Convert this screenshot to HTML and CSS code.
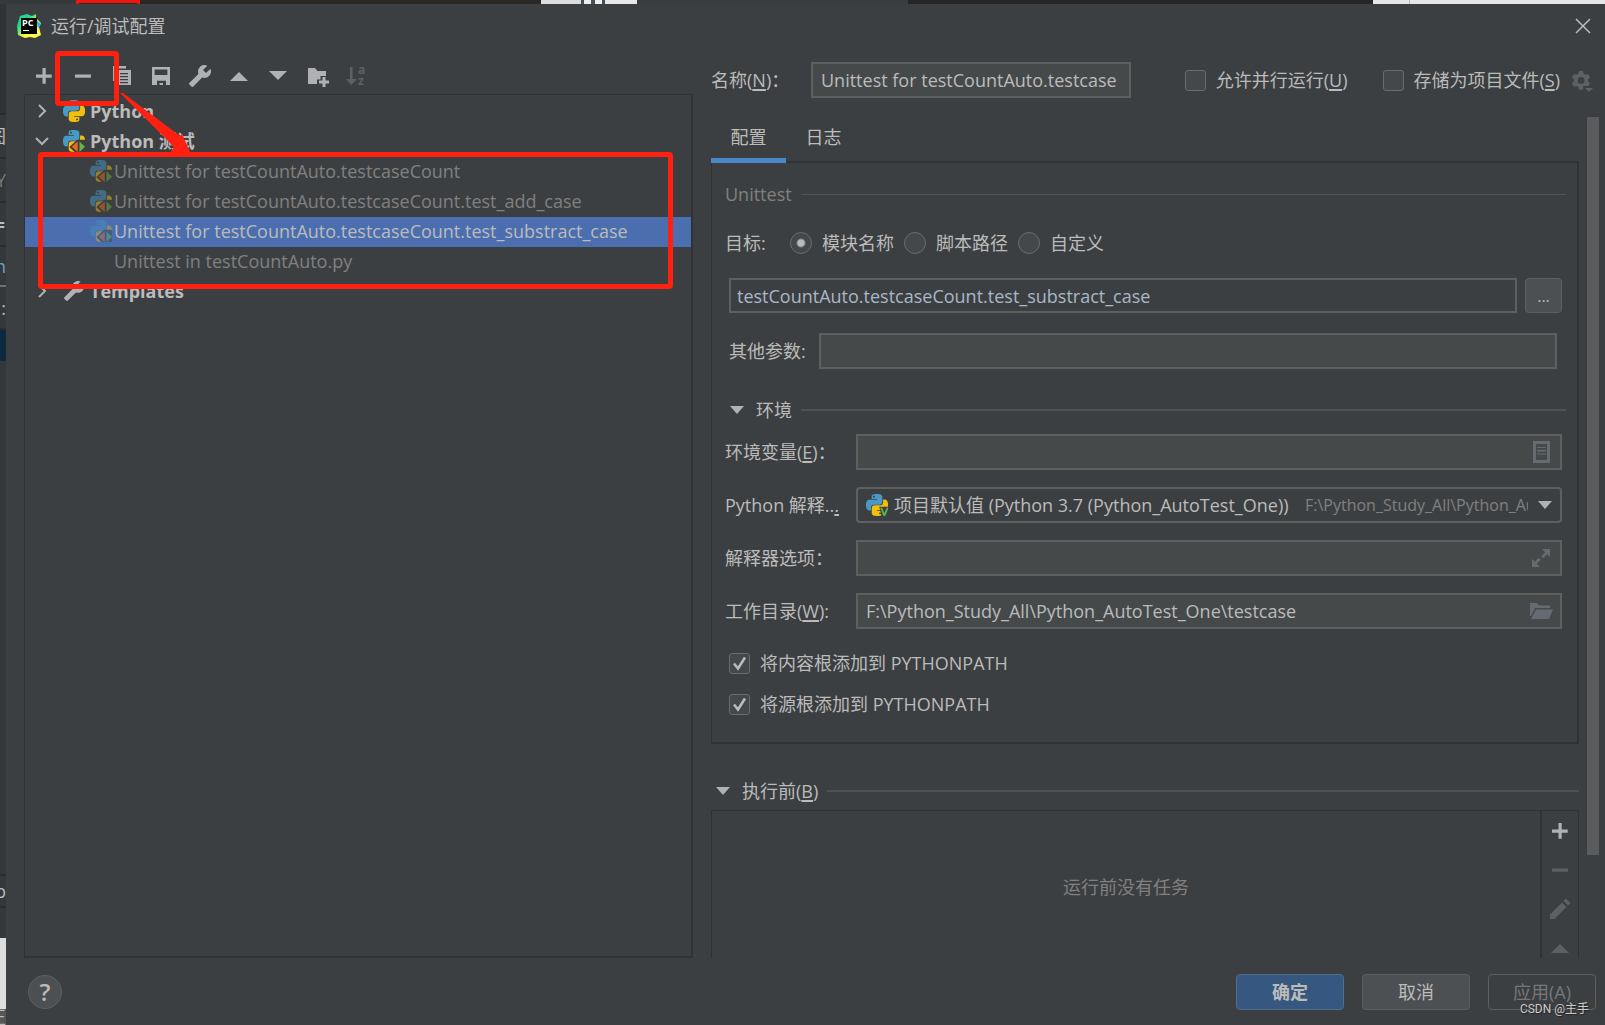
FILE: index.html
```html
<!DOCTYPE html>
<html lang="zh-CN">
<head>
<meta charset="utf-8">
<title>运行/调试配置</title>
<link rel="stylesheet" href="styles.css">
</head>
<body>
<svg class="defs" aria-hidden="true">
  <defs>
    <linearGradient id="pc-grad" x1="0" y1="0" x2="1" y2="1">
      <stop offset="0.3" stop-color="#21d789"/>
      <stop offset="0.6" stop-color="#fcf84a"/>
    </linearGradient>
  </defs>
  <symbol id="i-python" viewBox="0 0 24 24">
    <path fill="#4799c8" d="M14.25.18l.9.2.73.26.59.3.45.32.34.34.25.34.16.33.1.3.04.26.02.2-.01.13V8.5l-.05.63-.13.55-.21.46-.26.38-.3.31-.33.25-.35.19-.35.14-.33.1-.3.07-.26.04-.21.02H8.77l-.69.05-.59.14-.5.22-.41.27-.33.32-.27.35-.2.36-.15.37-.1.35-.07.32-.04.27-.02.21v3.06H3.17l-.21-.03-.28-.07-.32-.12-.35-.18-.36-.26-.36-.36-.35-.46-.32-.59-.28-.73-.21-.88-.14-1.05-.05-1.23.06-1.22.16-1.04.24-.87.32-.71.36-.57.4-.44.42-.33.42-.24.4-.16.36-.1.32-.05.24-.01h.16l.06.01h8.16v-.83H6.18l-.01-2.75-.02-.37.05-.34.11-.31.17-.28.25-.26.31-.23.38-.2.44-.18.51-.15.58-.12.64-.1.71-.06.77-.04.84-.02 1.27.05zm-6.3 1.98l-.23.33-.08.41.08.41.23.34.33.22.41.09.41-.09.33-.22.23-.34.08-.41-.08-.41-.23-.33-.33-.22-.41-.09-.41.09z"/>
    <path fill="#f2bf0c" d="M21.1 6.11l.28.06.32.12.35.18.36.27.36.35.35.47.32.59.28.73.21.88.14 1.04.05 1.23-.06 1.23-.16 1.04-.24.86-.32.71-.36.57-.4.45-.42.33-.42.24-.4.16-.36.09-.32.05-.24.02-.16-.01h-8.22v.82h5.84l.01 2.76.02.36-.05.34-.11.31-.17.29-.25.25-.31.24-.38.2-.44.17-.51.15-.58.13-.64.09-.71.07-.77.04-.84.01-1.27-.04-1.07-.14-.9-.2-.73-.25-.59-.3-.45-.33-.34-.34-.25-.34-.16-.33-.1-.3-.04-.25-.02-.2.01-.13v-5.34l.05-.64.13-.54.21-.46.26-.38.3-.32.33-.24.35-.2.35-.14.33-.1.3-.06.26-.04.21-.02.13-.01h5.84l.69-.05.59-.14.5-.21.41-.28.33-.32.27-.35.2-.36.15-.36.1-.35.07-.32.04-.28.02-.21V6.07h2.09l.14.01zm-6.47 14.25l-.23.33-.08.41.08.41.23.33.33.23.41.08.41-.08.33-.23.23-.33.08-.41-.08-.41-.23-.33-.33-.23-.41-.08-.41.08z"/>
  </symbol>
  <symbol id="i-pytest" viewBox="0 0 24 24">
    <use href="#i-python" width="24" height="24"/>
    <path class="cut" d="M7 18.500L15.500 10.500H24V24H12.500z"/>
    <path fill="#f26522" d="M16 12.500V24L9.500 18.300z"/>
    <path fill="#62b543" d="M18 12.500V24L24 18.300z"/>
  </symbol>
  <symbol id="i-pyvenv" viewBox="0 0 24 24">
    <use href="#i-python" width="24" height="24"/>
    <path class="cut" d="M14.500 14H24V24H17z"/>
    <path fill="none" stroke="#62b543" stroke-width="2" d="M16.500 15L20 23.500L23.700 15"/>
  </symbol>
  <symbol id="i-wrench" viewBox="0 0 24 24">
    <path transform="translate(24 0) scale(-1 1)" d="M22.7 19l-9.100-9.100c.9-2.300.4-5-1.500-6.900-2-2-5-2.400-7.400-1.300L9 6 6 9 1.600 4.700C.4 7.100.9 10.100 2.900 12.100c1.900 1.900 4.600 2.400 6.900 1.500l9.100 9.100c.4.4 1 .4 1.400 0l2.300-2.300c.5-.4.5-1.100.1-1.400z"/>
  </symbol>
  <symbol id="i-plus" viewBox="0 0 24 24"><path d="M10.500 4h3.200v6.500h6v3.200h-6v6h-3.200v-6H4v-3.200h6.500z"/></symbol>
  <symbol id="i-minus" viewBox="0 0 24 24"><path d="M4 10.500h16v3.200H4z"/></symbol>
  <symbol id="i-up" viewBox="0 0 24 24"><path d="M3 17L12 8l9 9z"/></symbol>
  <symbol id="i-down" viewBox="0 0 24 24"><path d="M3 7h18l-9 9z"/></symbol>
  <symbol id="i-tri" viewBox="0 0 14 8"><path d="M0 0h14L7 8z"/></symbol>
</svg>

<div class="desktop">
  <div class="strip-top" aria-hidden="true">
    <span class="s-a"></span><span class="s-red"></span><span class="s-b"></span><span class="s-c"></span><span class="s-d"></span><span class="s-e"></span><span class="s-f"></span><span class="s-g"></span>
  </div>
  <div class="strip-left" aria-hidden="true">
    <span class="l-a"></span><span class="l-b">图</span><span class="l-c">Y</span><span class="l-d">≑</span><span class="l-e">n</span><span class="l-f">:</span><span class="l-g"></span><span class="l-h"></span><span class="l-i">p</span><span class="l-m"></span><span class="l-j"></span><span class="l-k">正</span>
  </div>

  <main class="dialog">
    <header class="titlebar">
      <svg class="logo" viewBox="0 0 24 24" aria-hidden="true">
        <path fill="url(#pc-grad)" d="M3 2L10 0l5 2 4-2v4l5 5-2 4 2 8-6 3-5-1-5 1-7-3L0 12z"/>
        <path fill="#07c3f2" d="M19 6l5 4-3 4z"/>
        <path d="M4 4h16v16H4z"/>
        <text x="5" y="12" class="logo-text">PC</text>
        <path fill="#fff" d="M6 16h6v1H6z"/>
      </svg>
      <h1>运行/调试配置</h1>
      <button class="close" aria-label="关闭"><svg viewBox="0 0 16 16"><path d="M1 1l14 14M15 1L1 15"/></svg></button>
    </header>

    <div class="content">
      <section class="left">
        <div class="toolbar">
          <button aria-label="添加"><svg><use href="#i-plus"/></svg></button>
          <button aria-label="移除"><svg><use href="#i-minus"/></svg></button>
          <button aria-label="复制"><svg viewBox="0 0 24 24"><path d="M3 2h13v2.500H5.500V17H3z"/><path fill-rule="evenodd" d="M7 6h14v15H7zM10 9v1.200h8V9zM10 12v1.200h8V12zM10 15v1.200h8V15zM10 18v1.200h8V18z"/></svg></button>
          <button aria-label="保存"><svg viewBox="0 0 24 24"><path fill-rule="evenodd" d="M3 3h18v18h-4v-4.300H8V21H3zM5.600 5.500V11h12.800V5.500z"/><path d="M10.500 19h3.500v2h-3.500z"/></svg></button>
          <button aria-label="编辑模板"><svg><use href="#i-wrench"/></svg></button>
          <button aria-label="上移"><svg><use href="#i-up"/></svg></button>
          <button aria-label="下移"><svg><use href="#i-down"/></svg></button>
          <button aria-label="新建文件夹"><svg viewBox="0 0 24 24"><path d="M3 4h7l2.500 3H21v5h-5.500v3.500H12V20H3z"/><path d="M17.500 13h3v3.500H24v3h-3.500V23h-3v-3.500H14v-3h3.500z"/></svg></button>
          <button class="off" aria-label="排序"><svg viewBox="0 0 24 24"><path d="M6 3h2.500v12H13l-5.700 6L2 15h4z"/><text x="14" y="10" class="az">a</text><text x="14" y="21" class="az">z</text></svg></button>
        </div>
        <ul class="tree">
          <li class="node"><svg class="chev" viewBox="0 0 14 14"><path d="M4 1l6 6-6 6"/></svg><svg class="ico"><use href="#i-python"/></svg><b>Python</b></li>
          <li class="node"><svg class="chev" viewBox="0 0 14 14"><path d="M1 4l6 6 6-6"/></svg><svg class="ico"><use href="#i-pytest"/></svg><b>Python 测试</b></li>
          <li class="leaf"><svg class="ico"><use href="#i-pytest"/></svg><span>Unittest for testCountAuto.testcaseCount</span></li>
          <li class="leaf"><svg class="ico"><use href="#i-pytest"/></svg><span>Unittest for testCountAuto.testcaseCount.test_add_case</span></li>
          <li class="leaf selected"><svg class="ico"><use href="#i-pytest"/></svg><span>Unittest for testCountAuto.testcaseCount.test_substract_case</span></li>
          <li class="leaf"><svg class="ico"></svg><span>Unittest in testCountAuto.py</span></li>
          <li class="node"><svg class="chev" viewBox="0 0 14 14"><path d="M4 1l6 6-6 6"/></svg><svg class="ico"><use href="#i-wrench"/></svg><b>Templates</b></li>
        </ul>
      </section>

      <section class="right">
        <div class="namebar">
          <label class="name-label" for="name">名称(<u>N</u>)：</label>
          <input id="name" class="field name-field" type="text" value="Unittest for testCountAuto.testcase">
          <div class="namebar-end">
            <label class="check"><input type="checkbox"><span>允许并行运行(<u>U</u>)</span></label>
            <label class="check"><input type="checkbox"><span>存储为项目文件(<u>S</u>)</span></label>
            <button class="gear" aria-label="存储设置" disabled><svg viewBox="0 0 22 22"><path fill-rule="evenodd" d="M7 0h4l.6 2.600 1.900 1.100 2.600-.8 2 3.500-2 1.800v2.200l2 1.800-2 3.500-2.600-.8-1.900 1.100L11 18.800H7l-.6-2.800-1.900-1.100-2.600.8-2-3.500 2-1.800V8.200l-2-1.800 2-3.500 2.600.8 1.900-1.100zM9 6a3.400 3.400 0 1 0 0 6.800A3.400 3.400 0 0 0 9 6z"/><path class="gear-tri" d="M11 15h11v2l-5 5h-2l-4-4z"/><path d="M13 17h8l-4 4z"/></svg></button>
          </div>
        </div>

        <div class="viewport">
          <div class="page">
            <div class="tabs" role="tablist">
              <button class="tab active" role="tab">配置</button>
              <button class="tab" role="tab">日志</button>
            </div>
            <div class="panel">
              <div class="group muted"><span>Unittest</span><hr></div>
              <fieldset class="target">
                <legend>目标:</legend>
                <label class="radio"><input type="radio" name="target" checked><span>模块名称</span></label>
                <label class="radio"><input type="radio" name="target"><span>脚本路径</span></label>
                <label class="radio"><input type="radio" name="target"><span>自定义</span></label>
              </fieldset>
              <div class="target-row">
                <input class="field editor" type="text" aria-label="模块名称" value="testCountAuto.testcaseCount.test_substract_case">
                <button class="btn browse">...</button>
              </div>
              <div class="params">
                <label for="params">其他参数:</label>
                <input id="params" class="field" type="text">
              </div>
              <div class="group env"><svg class="tri"><use href="#i-tri"/></svg><span>环境</span><hr class="thick"></div>
              <div class="form">
                <label for="env">环境变量(<u>E</u>)：</label>
                <div class="field wrap"><input id="env" type="text"><svg viewBox="0 0 22 22"><path fill-rule="evenodd" d="M3 0h17v22H3zM6 3v16h11V3z"/><path d="M7 6h9v1H7zM7 9h9v1.500H7zM7 12.500h9v1H7z"/></svg></div>
                <label for="sdk">Python 解释..<u>.</u></label>
                <div class="field combo"><svg class="ico"><use href="#i-pyvenv"/></svg><select id="sdk"><option>项目默认值 (Python 3.7 (Python_AutoTest_One))</option></select><span class="path">F:\Python_Study_All\Python_AutoTest_One\venv</span><svg class="tri"><use href="#i-tri"/></svg></div>
                <label for="opts">解释器选项：</label>
                <div class="field wrap"><input id="opts" type="text"><svg viewBox="0 0 22 22"><path d="M12 2h8v8l-2.800-2.800-4 4-2-2 4-4zM2 20v-8l2.800 2.800 4-4 2 2-4 4L10 20z"/></svg></div>
                <label for="wd">工作目录(<u>W</u>):</label>
                <div class="field wrap"><input id="wd" type="text" value="F:\Python_Study_All\Python_AutoTest_One\testcase"><svg viewBox="0 0 22 22"><path d="M0 3h7l2 2.500h11V8H5L1 16H0z"/><path d="M6 9.500h17L19 19H1z"/></svg></div>
              </div>
              <div class="checks">
                <label class="check"><input type="checkbox" checked><span>将内容根添加到 PYTHONPATH</span></label>
                <label class="check"><input type="checkbox" checked><span>将源根添加到 PYTHONPATH</span></label>
              </div>
            </div>
            <div class="group before"><svg class="tri"><use href="#i-tri"/></svg><span>执行前(<u>B</u>)</span><hr class="thick"></div>
            <div class="tasks">
              <p>运行前没有任务</p>
              <div class="task-tools">
                <button aria-label="添加任务"><svg><use href="#i-plus"/></svg></button>
                <button class="off" aria-label="移除任务"><svg><use href="#i-minus"/></svg></button>
                <button class="off" aria-label="编辑任务"><svg viewBox="0 0 24 24"><path d="M2 17.500L14 5.500 18.500 10 6.500 22H2zM15.500 4L18 1.500 22.500 6 20 8.500z"/></svg></button>
                <button class="off" aria-label="上移任务"><svg><use href="#i-up"/></svg></button>
                <button class="off" aria-label="下移任务"><svg><use href="#i-down"/></svg></button>
              </div>
            </div>
          </div>
          <div class="scrollbar"></div>
        </div>
      </section>
    </div>

    <footer class="footer">
      <button class="help" aria-label="帮助">?</button>
      <button class="btn primary">确定</button>
      <button class="btn">取消</button>
      <button class="btn disabled">应用(A)</button>
    </footer>
  </main>

  <div class="mark mark-remove"></div>
  <div class="mark mark-list"></div>
  <svg class="arrow" viewBox="0 0 74 64" aria-hidden="true"><path d="M0 0h3L60 43l2-2 9 20-21-1 4-6z"/></svg>
  <div class="credit">CSDN @主手</div>
</div>
</body>
</html>
```
FILE: styles.css
```css
* { box-sizing: border-box; }

body {
  margin: 0;
  background: #3c3f41;
  color: #bbbbbb;
  font: 18px/30px "Open Sans", "Noto Sans CJK SC", sans-serif;
}

button, input, select {
  font: inherit;
  color: inherit;
  margin: 0;
  padding: 0;
  border: 0;
  background: none;
}

h1, p, ul, fieldset, legend { margin: 0; padding: 0; border: 0; }
u { text-underline-offset: 2px; text-decoration-thickness: 2px; }
.defs { position: absolute; width: 0; height: 0; }
svg { display: block; fill: #afb1b3; flex: none; }
.cut { fill: #3c3f41; }

/* window and the application behind it */
.desktop {
  position: relative;
  display: grid;
  grid-template: 4px minmax(0, 1fr) / 6px minmax(0, 1fr);
  height: 100vh;
  overflow: hidden;
}

.strip-top { grid-column: 1 / 3; display: flex; overflow: hidden; }
.s-a { flex: 76 0 0; background: #35393b; }
.s-red { flex: 58 0 0; border: 3px solid #f0140f; border-bottom: 0; background: #2b2b2b; }
.s-b { flex: 401 0 0; background: #292827; }
.s-c { flex: 40 0 0; background: #dcdcdc; }
.s-d { flex: 56 0 0; background: linear-gradient(90deg, #4a4d60 3px, #eeeeee 3px 10px, #4a4d60 10px 14px, #eeeeee 14px 21px, #4a4d60 21px 24px, #e8e8e8 24px); }
.s-e { flex: 271 0 0; background: #393d3f; }
.s-f { flex: 465 0 0; background: #262626; }
.s-g { flex: 232 0 0; background: linear-gradient(90deg, #e6e6e6 36px, #b8bcc0 36px 37px, #e6e6e6 37px); }

.strip-left { display: flex; flex-direction: column; overflow: hidden; background: #35383a; }
.strip-left span { flex: none; overflow: hidden; display: flex; justify-content: flex-end; align-items: center; border-bottom: 2px solid #2b2b2b; }
.l-a { height: 111px; background: #303335; }
.l-b { height: 44px; }
.l-c { height: 44px; color: #777777; }
.l-d { height: 44px; }
.l-e { height: 40px; color: #6f9fc0; }
.strip-left .l-e { border-bottom-color: #6e7378; }
.l-f { height: 43px; }
.strip-left .l-g { height: 31px; background: #0d293e; border: 0; }
.l-h { height: 515px; }
.l-i { height: 32px; }
.strip-left .l-m { height: 30px; border: 0; }
.strip-left .l-j { height: 71px; background: #dddddd; border: 0; }
.strip-left .l-k { height: 16px; background: #555555; border: 0; }

.dialog { display: flex; flex-direction: column; min-width: 0; min-height: 0; background: #3c3f41; }

.titlebar { display: flex; align-items: center; height: 44px; padding: 0 14px 0 11px; flex: none; }
.logo { width: 24px; height: 24px; fill: #000000; }
.logo-text { font: bold 9px "Open Sans", sans-serif; fill: #ffffff; }
h1 { font-size: 18px; font-weight: 400; margin-left: 10px; flex: 1; }
.close svg { width: 16px; height: 16px; fill: none; stroke: #bbbbbb; stroke-width: 1.5; }

.content {
  display: grid;
  grid-template-columns: minmax(0, 669fr) minmax(0, 894fr);
  grid-template-rows: minmax(0, 1fr);
  gap: 18px;
  padding-left: 18px;
  flex: 1;
  min-height: 0;
}

/* configuration list */
.left { display: flex; flex-direction: column; }
.toolbar { display: flex; height: 46px; padding: 10px 0 0; flex: none; }
.toolbar button { display: grid; place-items: center; width: 39px; }
.toolbar svg, .task-tools svg { width: 24px; height: 24px; }
.off svg { fill: #5e6062; }
.az { font: bold 12px "Open Sans", sans-serif; }

.tree {
  flex: 1;
  list-style: none;
  border: solid #323232;
  border-width: 1px 2px 2px 1px;
  padding-top: 2px;
}
.tree li { display: flex; align-items: center; height: 30px; padding-bottom: 2px; }
.tree .node { padding-left: 10px; }
.chev { width: 14px; height: 14px; margin-right: 14px; fill: none; stroke: #afb1b3; stroke-width: 2; }
.ico { width: 22px; height: 22px; }
.node b { margin-left: 5px; font-weight: 700; }
.tree .leaf { padding-left: 65px; color: #808080; }
.leaf .ico { opacity: 0.5; margin-right: 2px; }
.tree .selected { background: #4b6eaf; color: #bbbbbb; }
.selected .ico { opacity: 0.4; }
.selected { --badge-gap: #4b6eaf; }
.selected .ico { color: #4b6eaf; }

/* editor side */
.right { display: flex; flex-direction: column; min-height: 0; min-width: 0; }
.namebar { display: flex; align-items: center; height: 62px; padding: 2px 11px 0 0; flex: none; }
.name-label { width: 100px; }
.name-field { width: 320px; }
.namebar-end { display: flex; align-items: center; margin-left: auto; }
.namebar-end .check { margin-right: 35px; }
.namebar-end .check + .check { margin-right: 12px; }
.gear { padding-top: 3px; }
.gear svg { width: 22px; height: 22px; fill: #5e6062; overflow: visible; }
.gear .gear-tri { fill: #3c3f41; }

.field {
  height: 36px;
  padding: 0 8px;
  border: 2px solid #5e6060;
  background: #45494a;
  min-width: 0;
}
.check, .radio { display: flex; align-items: center; }
.check input {
  appearance: none;
  width: 21px;
  height: 21px;
  margin-right: 10px;
  border: 1px solid #6b6b6b;
  border-radius: 3px;
  background: #43494a;
}
.check input:checked {
  background: #43494a url("data:image/svg+xml,%3Csvg xmlns='http://www.w3.org/2000/svg' viewBox='0 0 19 19'%3E%3Cpath d='M4 9.500l4 5 7-11' fill='none' stroke='%23bbbbbb' stroke-width='2.500'/%3E%3C/svg%3E") center / 19px 19px;
}
.radio input {
  appearance: none;
  width: 22px;
  height: 22px;
  margin-right: 10px;
  border: 1px solid #6b6b6b;
  border-radius: 50%;
  background: #43494a;
}
.radio input:checked { background: radial-gradient(circle, #bbbbbb 3px, #43494a 5px); }

.viewport { display: grid; grid-template-columns: minmax(0, 1fr) 12px; gap: 8px; padding-right: 6px; flex: 1; min-height: 0; overflow: hidden; }
.scrollbar { height: 87%; margin-top: 7px; background: #595b5d; }
.page { min-height: 0; }

.tabs { display: flex; height: 53px; border-bottom: 2px solid #323232; }
.tab { height: 53px; width: 75px; padding-top: 6px; border-bottom: 5px solid transparent; }
.tab.active { border-bottom-color: #4a88c7; }

.panel { border: solid #323232; border-width: 0 2px 2px 1px; padding: 16px 11px 23px 13px; }
.group { display: flex; align-items: center; height: 30px; }
.group hr { flex: 1; margin: 0 0 0 9px; border: 0; height: 1px; background: #515557; }
.group .thick { height: 2px; background: #515151; }
.muted { color: #808080; }
.tri { width: 14px; height: 8px; }

.target { display: flex; align-items: center; height: 30px; margin-top: 19px; }
.target legend { float: left; width: 65px; }
.radio { margin-right: 10px; }

.target-row { display: flex; gap: 8px; margin: 20px 4px 0; }
.editor { flex: 1; height: 35px; padding: 0 6px; background: #3c3f41; color: #a9b7c6; }
.btn {
  width: 108px;
  height: 36px;
  border: 1px solid #5e6060;
  border-radius: 4px;
  background: #4c5052;
}
.browse { width: 37px; height: 35px; font-size: 16px; }

.params { display: flex; align-items: center; margin: 20px 9px 0 4px; }
.params label { width: 90px; }
.params .field { flex: 1; }

.env { margin-top: 26px; padding-left: 5px; }
.env span, .before span { margin-left: 12px; }

.form { display: grid; grid-template-columns: 131px minmax(0, 1fr); grid-auto-rows: 36px; row-gap: 17px; align-items: center; margin: 9px 4px 0 0; }
.form .field { display: flex; align-items: center; }
.wrap input { flex: 1; min-width: 0; outline: 0; }
.wrap svg { width: 22px; height: 22px; fill: #646c71; overflow: visible; }
.combo { background: #3c3f41; border-radius: 4px; }
.combo select { appearance: none; flex: none; margin-left: 6px; }
.path { flex: 1; margin: 0 10px 0 16px; overflow: hidden; white-space: nowrap; font-size: 16px; color: #808080; }

.checks { display: grid; gap: 11px; margin: 19px 0 0 4px; }

.before { margin-top: 32px; padding-left: 5px; }
.tasks { display: flex; margin-top: 4px; border: 1px solid #323232; }
.tasks p { flex: 1; padding-top: 61px; text-align: center; color: #808080; }
.task-tools { display: flex; flex-direction: column; width: 38px; border-left: 2px solid #323232; }
.task-tools button { display: grid; place-items: center; height: 39px; }

/* bottom row */
.footer { display: flex; align-items: center; gap: 18px; height: 67px; padding: 0 9px 0 22px; flex: none; }
.help { width: 34px; height: 34px; margin-right: auto; border: 1px solid #5e6060; border-radius: 50%; background: #4c5052; font-size: 24px; font-weight: 600; }
.primary { background: #365880; border-color: #4c708c; font-weight: 700; }
.disabled { background: none; color: #777777; }

/* annotations drawn over the window */
.mark { position: absolute; border: 5px solid #ff2010; border-radius: 4px; pointer-events: none; }
.mark-remove { left: 55px; top: 51px; width: 64px; height: 55px; }
.mark-list { left: 38px; top: 152px; width: 635px; height: 137px; }
.arrow { position: absolute; left: 120px; top: 93px; width: 74px; height: 64px; fill: #ff2010; pointer-events: none; }
.credit { position: absolute; right: 16px; bottom: 6px; font: 12px/20px Roboto, "Noto Sans CJK SC", sans-serif; color: #cccccc; text-shadow: 1px 1px 1px #222222; }
```
